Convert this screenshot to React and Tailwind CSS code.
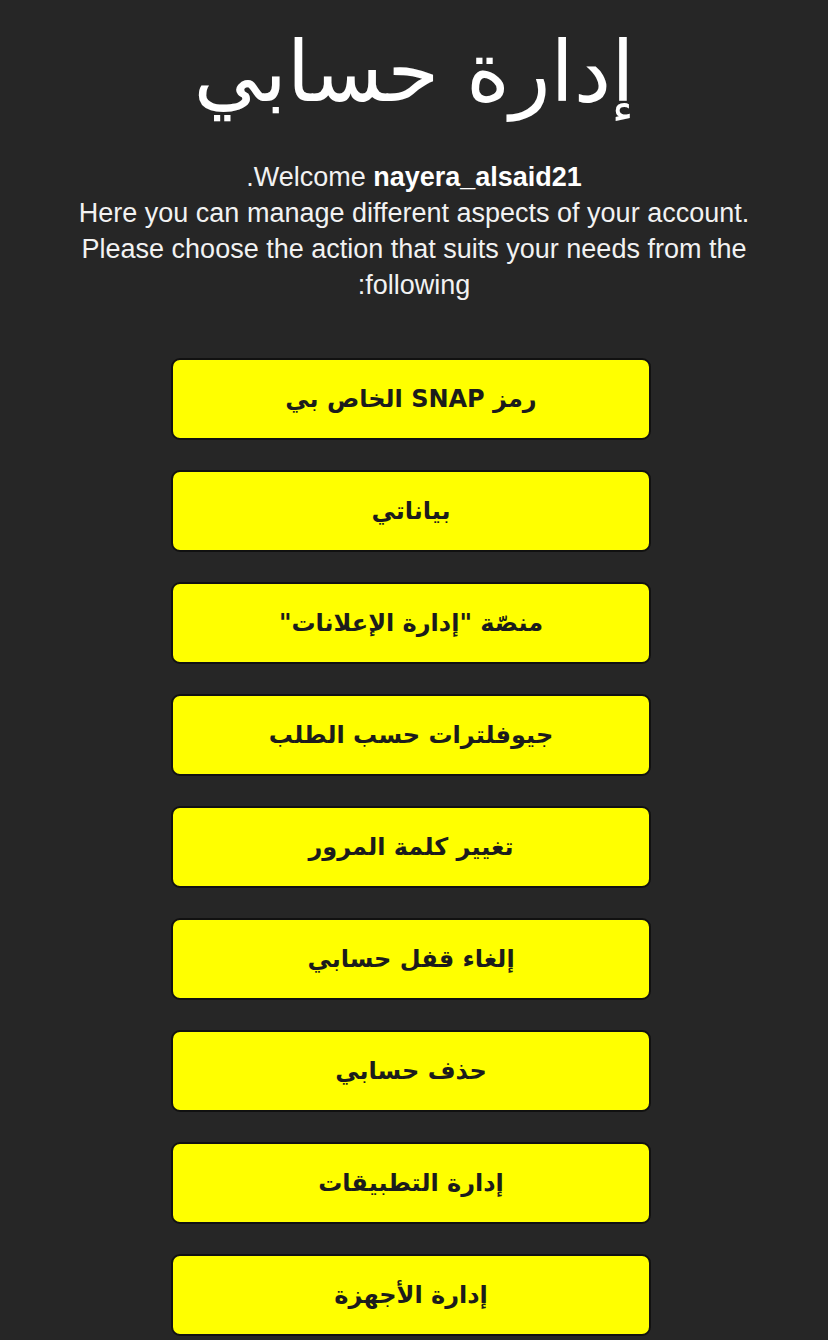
const ACTIONS = [
  "رمز SNAP الخاص بي",
  "بياناتي",
  "منصّة \"إدارة الإعلانات\"",
  "جيوفلترات حسب الطلب",
  "تغيير كلمة المرور",
  "إلغاء قفل حسابي",
  "حذف حسابي",
  "إدارة التطبيقات",
  "إدارة الأجهزة",
];

const arabicFont = "font-['DejaVu_Sans','Noto_Sans',sans-serif]";

export default function App() {
  return (
    <div className="min-h-screen bg-[#262626] pb-10 font-['Liberation_Sans',Arial,sans-serif] text-white">
      <h1
        dir="rtl"
        className={`pt-[17px] text-center text-[84px] font-normal leading-[110px] ${arabicFont}`}
      >
        إدارة حسابي
      </h1>

      <div className="mt-[32px] text-center text-[27px] font-light leading-[36px] text-[#f2f2f2]">
        <p dir="rtl">
          Welcome <b className="font-bold text-white">nayera_alsaid21</b>.
        </p>
        <p>Here you can manage different aspects of your account.</p>
        <p>Please choose the action that suits your needs from the</p>
        <p dir="rtl">following:</p>
      </div>

      <div className="mt-[55px] flex flex-col items-center gap-[30px] pr-[6px]">
        {ACTIONS.map((label) => (
          <button
            key={label}
            dir="rtl"
            className={`flex h-[82px] w-[480px] items-center justify-center rounded-[9px] border-2 border-[#111] bg-[#ffff00] text-[24px] font-bold text-[#1c1c1c] ${arabicFont}`}
          >
            {label}
          </button>
        ))}
      </div>
    </div>
  );
}
